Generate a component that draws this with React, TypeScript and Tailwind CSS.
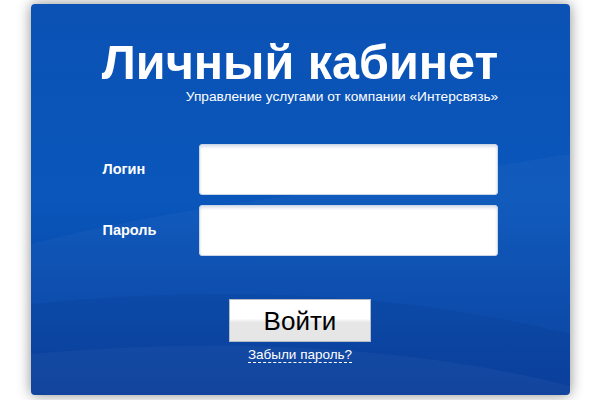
export default function App() {
  return (
    <div className="min-h-[400px] bg-white pt-[4px] font-['Liberation_Sans',Arial,sans-serif]">
      <div className="relative mx-auto h-[391px] w-[539px] overflow-hidden rounded-[4px] bg-gradient-to-b from-[#0b52b4] via-[#0a56bb] to-[#053c9c] shadow-[0_0_14px_rgba(0,0,0,0.45)]">
        <svg className="absolute inset-0 h-full w-full" viewBox="0 0 539 391" preserveAspectRatio="none">
          <path d="M0 240 C 150 200, 330 185, 539 150 L539 391 L0 391 Z" fill="#ffffff" opacity="0.03" />
          <path d="M0 300 C 200 280, 380 290, 539 330 L539 391 L0 391 Z" fill="#001a60" opacity="0.08" />
          <path d="M0 350 C 160 336, 360 336, 539 382 L539 391 L0 391 Z" fill="#ffffff" opacity="0.035" />
        </svg>
        <div className="relative flex flex-col items-center">
          <div className="mt-[30px] flex flex-col items-end">
            <h1 className="text-[48.5px] font-bold leading-[56px] text-white">Личный кабинет</h1>
            <p className="mt-[-1px] text-[13.7px] leading-[15px] text-white">
              Управление услугами от компании «Интерсвязь»
            </p>
          </div>
        </div>
        <div className="relative mt-[40px] flex flex-col gap-[10px] pl-[72px]">
          <div className="flex items-center">
            <label className="w-[96px] text-[14.5px] font-bold text-white">Логин</label>
            <input
              type="text"
              className="h-[51px] w-[299px] rounded-[3px] border border-[#c9d6e6] bg-white px-3 shadow-[inset_0_2px_3px_rgba(0,40,120,0.15)] outline-none"
            />
          </div>
          <div className="flex items-center">
            <label className="w-[96px] text-[14.5px] font-bold text-white">Пароль</label>
            <input
              type="password"
              className="h-[51px] w-[299px] rounded-[3px] border border-[#c9d6e6] bg-white px-3 shadow-[inset_0_2px_3px_rgba(0,40,120,0.15)] outline-none"
            />
          </div>
        </div>
        <div className="relative mt-[43px] flex flex-col items-center">
          <button className="h-[43px] w-[142px] border border-[#b5bcc6] bg-gradient-to-b from-white from-45% to-[#e6e6e6] to-55% text-[26px] leading-none text-black">
            Войти
          </button>
          <a href="#" className="mt-[5px] border-b border-dashed border-white text-[13.5px] leading-[15px] text-white">
            Забыли пароль?
          </a>
        </div>
      </div>
    </div>
  );
}
